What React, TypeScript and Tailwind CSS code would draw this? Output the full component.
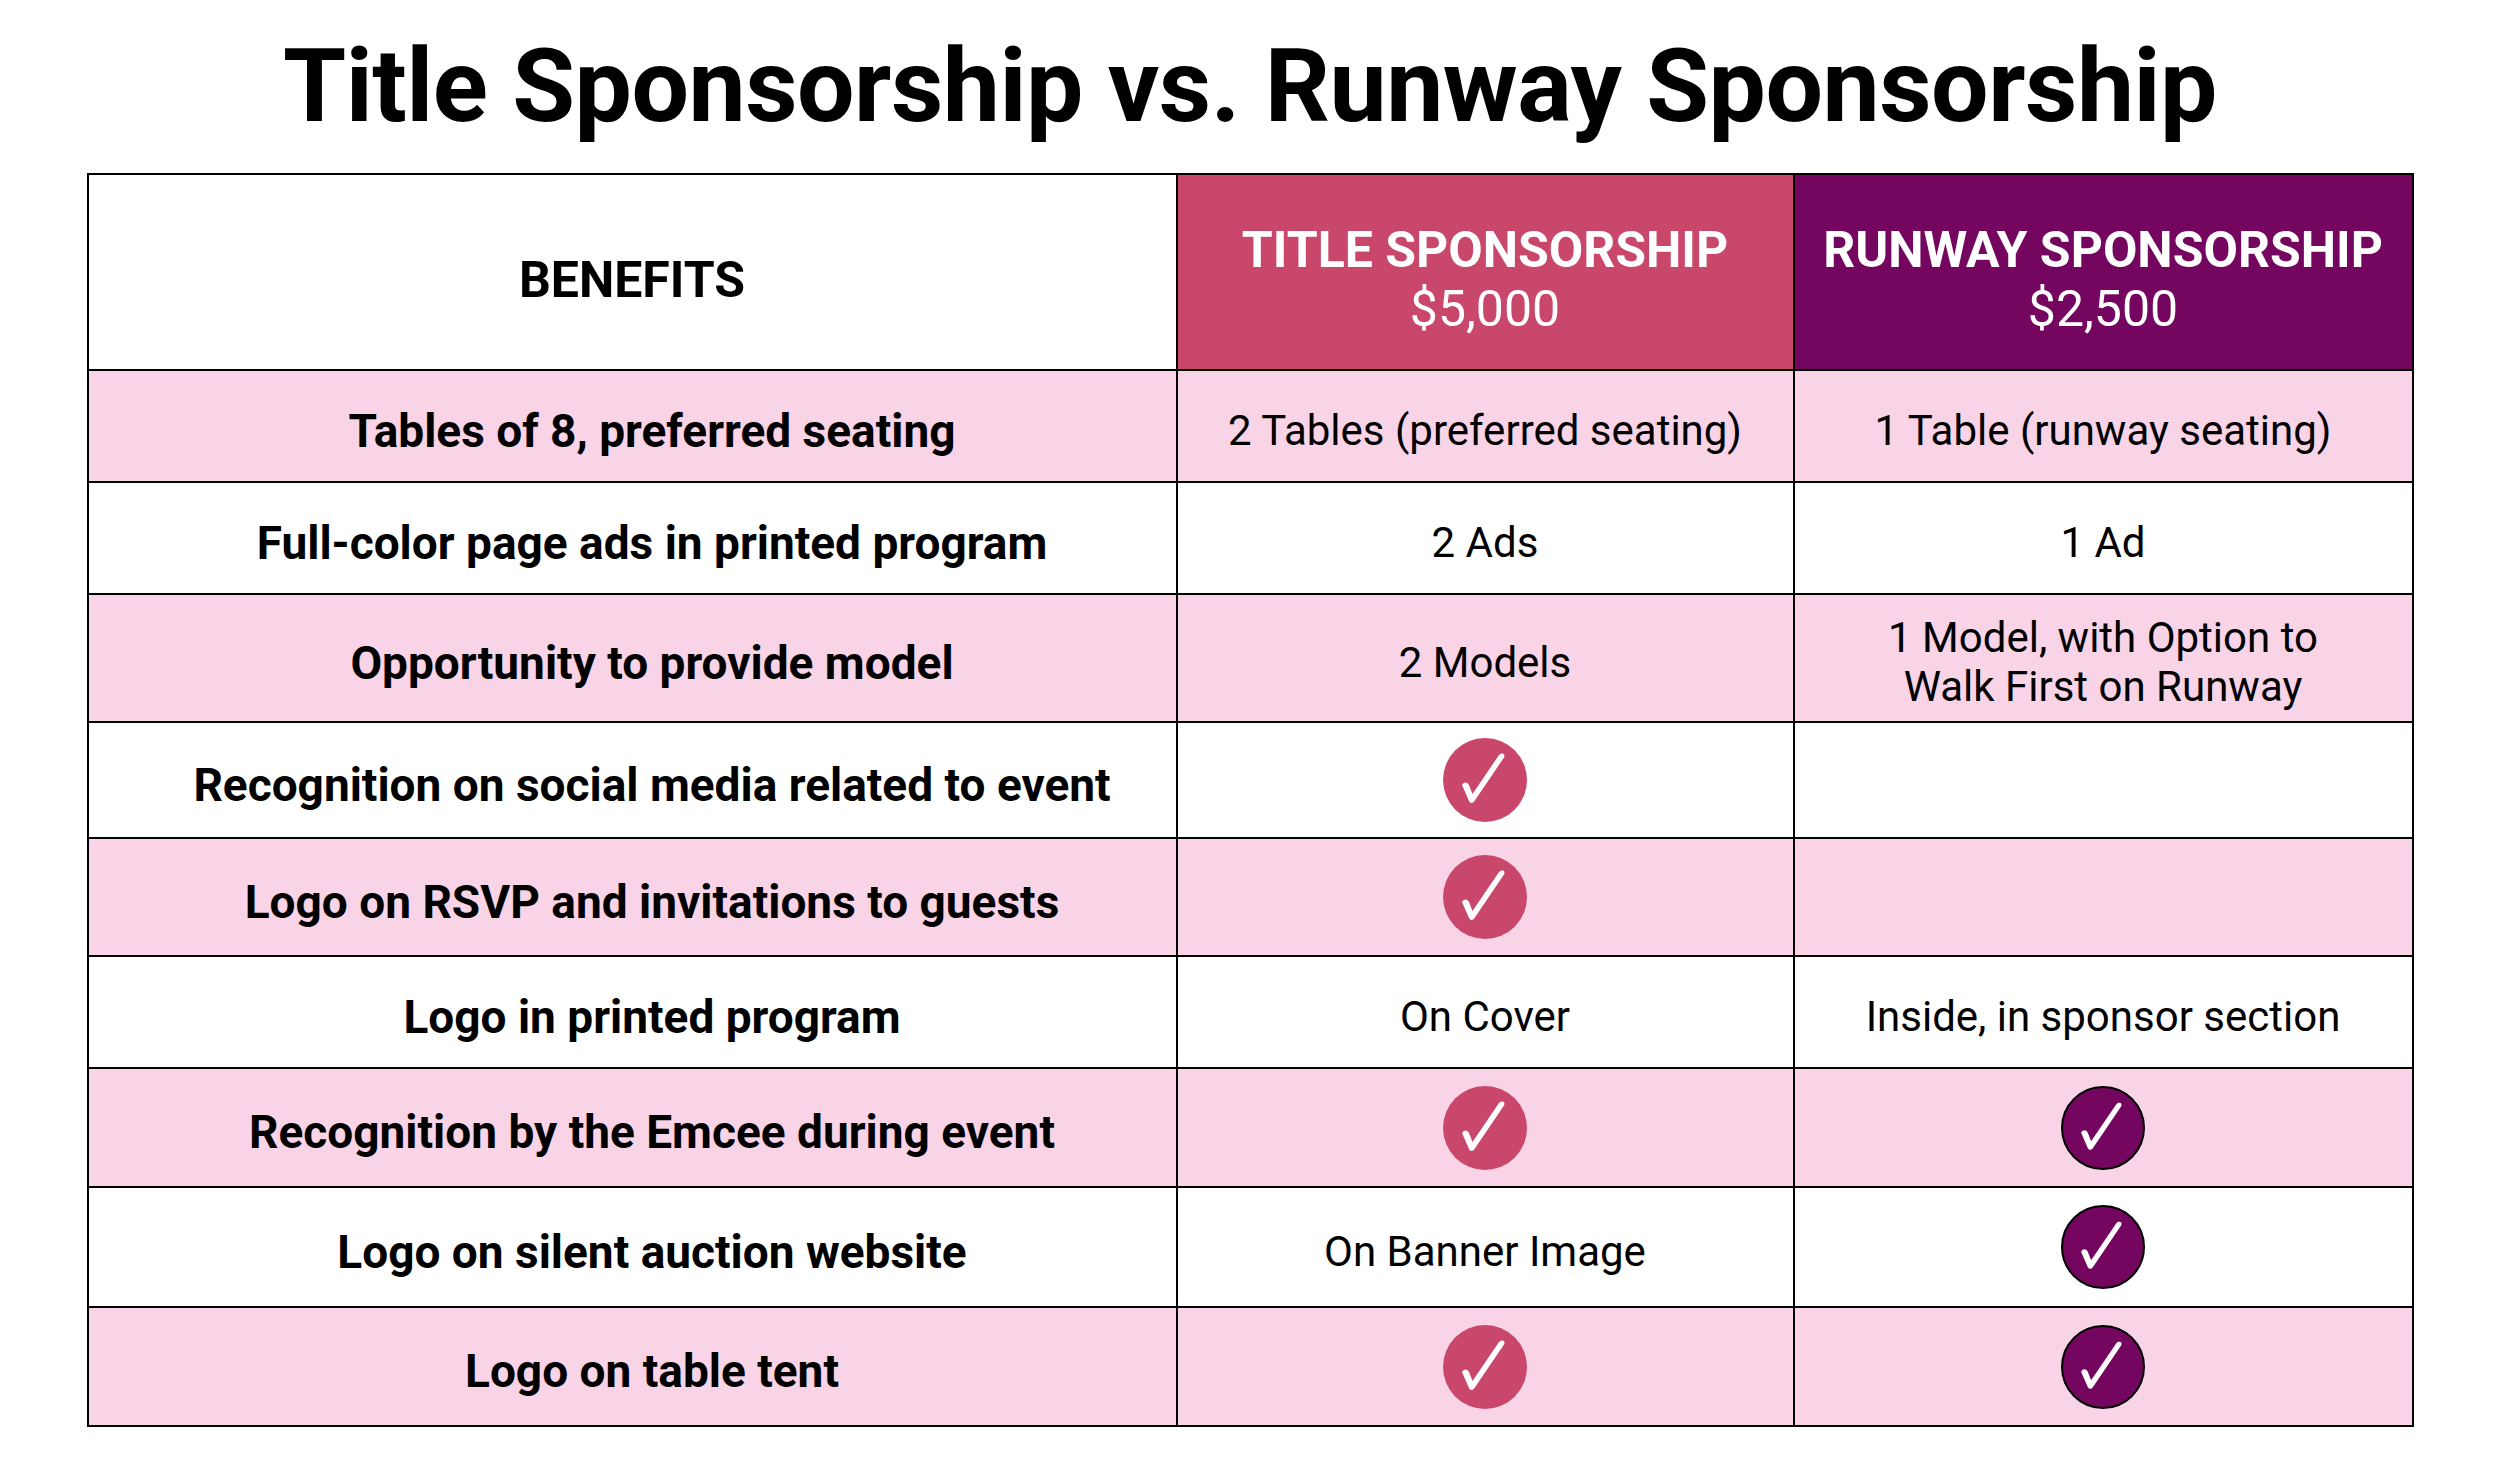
import React from "react";

type Cell = string | "check" | "";

const rows: { label: string; title: Cell; runway: Cell; pink: boolean; h: string }[] = [
  { label: "Tables of 8, preferred seating", title: "2 Tables (preferred seating)", runway: "1 Table (runway seating)", pink: true, h: "h-[112px]" },
  { label: "Full-color page ads in printed program", title: "2 Ads", runway: "1 Ad", pink: false, h: "h-[112px]" },
  { label: "Opportunity to provide model", title: "2 Models", runway: "1 Model, with Option to\nWalk First on Runway", pink: true, h: "h-[128px]" },
  { label: "Recognition on social media related to event", title: "check", runway: "", pink: false, h: "h-[116px]" },
  { label: "Logo on RSVP and invitations to guests", title: "check", runway: "", pink: true, h: "h-[118px]" },
  { label: "Logo in printed program", title: "On Cover", runway: "Inside, in sponsor section", pink: false, h: "h-[112px]" },
  { label: "Recognition by the Emcee during event", title: "check", runway: "check", pink: true, h: "h-[119px]" },
  { label: "Logo on silent auction website", title: "On Banner Image", runway: "check", pink: false, h: "h-[120px]" },
  { label: "Logo on table tent", title: "check", runway: "check", pink: true, h: "h-[119px]" },
];

function Check({ purple }: { purple?: boolean }) {
  return (
    <div
      className={
        purple
          ? "mx-auto flex h-[84px] w-[84px] items-center justify-center rounded-full border-2 border-black bg-[#74065f]"
          : "mx-auto flex h-[84px] w-[84px] items-center justify-center rounded-full bg-[#c8476b]"
      }
    >
      <svg viewBox="0 0 84 84" className="h-[84px] w-[84px]">
        <path
          d="M19 47 C20.5 43.5 24.5 43.5 26 47 L29.5 56 L56 17 C58.5 14 63 15.5 61 19.5 L31.5 63 C30 65.5 27 65.5 26 63 Z"
          fill="white"
        />
      </svg>
    </div>
  );
}

function Value({ v, purple }: { v: Cell; purple?: boolean }) {
  if (v === "check") return <Check purple={purple} />;
  if (!v) return null;
  return (
    <div className="whitespace-pre-line pt-[8px] text-[42px] leading-[49px] text-black">{v}</div>
  );
}

export default function App() {
  return (
    <div className="min-h-[1458px] w-[2500px] bg-white" style={{ fontFamily: "Roboto, 'Liberation Sans', sans-serif" }}>
      <div className="flex h-[173px] items-center justify-center pb-[2px]">
        <h1 className="text-[102px] font-bold leading-none tracking-[-0.5px] text-black">
          Title Sponsorship vs. Runway Sponsorship
        </h1>
      </div>
      <table className="mx-auto border-collapse border-2 border-black text-center">
        <colgroup>
          <col className="w-[1089px]" />
          <col className="w-[617px]" />
          <col className="w-[619px]" />
        </colgroup>
        <thead>
          <tr className="h-[196px]">
            <th className="border-2 border-black bg-white pt-[16px] text-[50px] font-bold text-black">BENEFITS</th>
            <th className="border-2 border-black bg-[#c8476b] pt-[16px] text-white">
              <div className="text-[50px] font-bold leading-[59px]">TITLE SPONSORSHIP</div>
              <div className="text-[50px] font-normal leading-[59px]">$5,000</div>
            </th>
            <th className="border-2 border-black bg-[#74065f] pt-[16px] text-white">
              <div className="text-[50px] font-bold leading-[59px]">RUNWAY SPONSORSHIP</div>
              <div className="text-[50px] font-normal leading-[59px]">$2,500</div>
            </th>
          </tr>
        </thead>
        <tbody>
          {rows.map((r, i) => (
            <tr key={i} className={r.h + (r.pink ? " bg-[#f9d3e6]" : " bg-white")}>
              <td className="border-2 border-black pl-[40px] pt-[10px] text-[46px] font-bold text-black">{r.label}</td>
              <td className="border-2 border-black">
                <Value v={r.title} />
              </td>
              <td className="border-2 border-black">
                <Value v={r.runway} purple />
              </td>
            </tr>
          ))}
        </tbody>
      </table>
    </div>
  );
}
